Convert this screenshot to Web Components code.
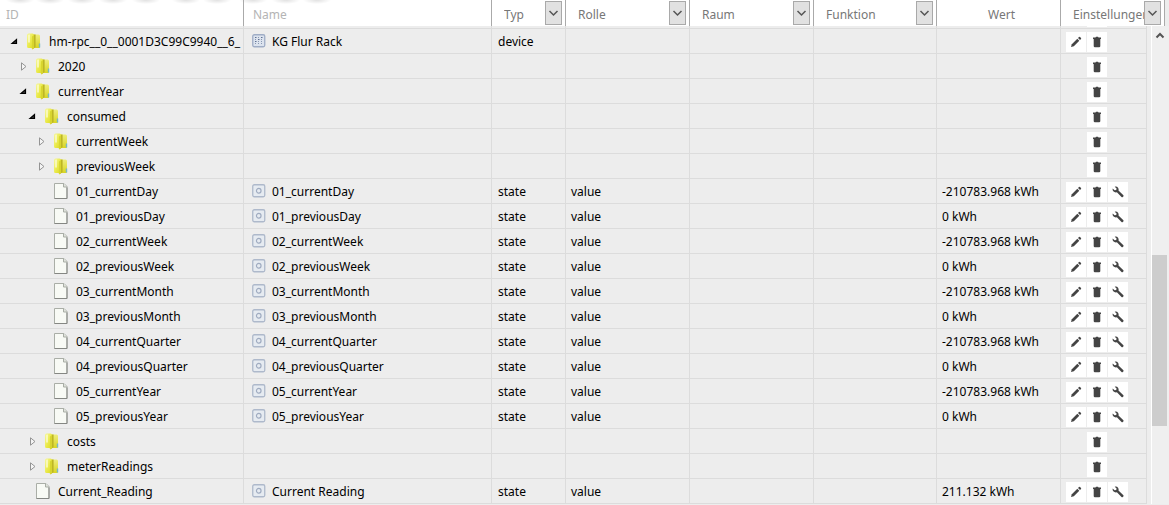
<!DOCTYPE html>
<html lang="de">
<head>
<meta charset="utf-8">
<title>Objekte</title>
<style>
  html { background: #ededed; }
  body { margin: 0; font: 12px/24px "Noto Sans", "Open Sans", sans-serif; color: #000; overflow: hidden; }
</style>
</head>
<body>
<object-browser></object-browser>

<template id="tpl-icon">
  <style>
    :host { display: block; flex: none; }
    svg { display: block; }
  </style>
</template>

<template id="tpl-tree-node">
  <style>
    :host { display: flex; align-items: flex-start; height: 24px; overflow: hidden; white-space: nowrap; padding-left: calc(9px * var(--level, 0) + 9px); }
    .caret { width: 18px; height: 24px; flex: none; display: grid; align-items: center; padding: 0; border: 0; background: none; }
    .icon { margin: 4px 7px 0 0; }
    .label { padding-top: 1px; }
  </style>
  <span class="caret"></span><ui-icon class="icon"></ui-icon><span class="label"><slot></slot></span>
</template>

<template id="tpl-row-actions">
  <style>
    :host { display: grid; grid-template-columns: repeat(3, 20px); gap: 1px; padding: 1px 0 0 5px; }
    button { width: 20px; height: 20px; padding: 0; border: 0; background: #fff; display: grid; place-items: center; }
    .edit { grid-column: 1; } .delete { grid-column: 2; } .config { grid-column: 3; }
    button { grid-row: 1; }
  </style>
</template>

<template id="tpl-filter">
  <style>
    :host { display: grid; grid-template-columns: 1fr 20px; height: 26px; align-items: start; }
    select { appearance: none; grid-area: 1 / 1 / 2 / 3; width: 100%; height: 26px; padding: 3px 0 0 12px; margin: 0; border: 0; background: none; font: inherit; color: #777; outline: 0; }
    .box { grid-area: 1 / 2; margin-top: 1px; pointer-events: none; }
  </style>
  <select></select><drop-box class="box"></drop-box>
</template>

<template id="tpl-drop-box">
  <style>
    :host { display: grid; place-items: center; width: 17px; height: 24px; box-sizing: border-box; background: #e1e1e1; border: 1px solid #a9a9a9; }
  </style>
  <ui-icon name="chevron"></ui-icon>
</template>

<template id="tpl-scroll">
  <style>
    :host { display: flex; flex-direction: column; align-items: flex-start; width: 17px; border-left: 1px solid #fff; margin-left: 4px; background: #efefef; }
    button { width: 15px; height: 18px; padding: 0; border: 0; background: none; display: grid; place-items: center; }
    .before { flex: 211; }
    .thumb { flex: 171; width: 15px; background: #cdcdcd; }
    .after { flex: 78; }
  </style>
  <button type="button" aria-label="Nach oben"><ui-icon name="up"></ui-icon></button>
  <div class="before"></div><div class="thumb"></div><div class="after"></div>
</template>

<template id="tpl-browser">
  <style>
    :host { display: block; }
    table { width: 100%; table-layout: fixed; border-collapse: separate; border-spacing: 0; }
    th, td { padding: 0; text-align: left; font-weight: 400; box-sizing: border-box; overflow: hidden; white-space: nowrap; }
    .head { padding-right: 4px; background: #ededed; }
    .head table {
      --puff: rgba(0,0,0,.12) 0, rgba(0,0,0,0) 100%;
      background:
        radial-gradient(14px 4px at 20px 0, var(--puff)), radial-gradient(14px 4px at 50px 0, var(--puff)),
        radial-gradient(14px 4px at 82px 0, var(--puff)), radial-gradient(14px 4px at 113px 0, var(--puff)),
        radial-gradient(14px 4px at 146px 0, var(--puff)), radial-gradient(14px 4px at 186px 0, var(--puff)),
        radial-gradient(14px 4px at 217px 0, var(--puff)), radial-gradient(14px 4px at 253px 0, var(--puff)),
        radial-gradient(14px 4px at 286px 0, var(--puff)), radial-gradient(14px 4px at 317px 0, var(--puff)), #fff;
    }
    th { height: 26px; border-right: 1px solid #aaa; color: #777; }
    th input { display: block; width: 100%; height: 26px; box-sizing: border-box; padding: 2px 0 0 9px; border: 0; background: none; font: inherit; outline: 0; }
    th:first-child input { padding-left: 6px; }
    th input::placeholder { color: #b4b4b4; }
    th.wert { text-align: center; padding: 3px 0 0 6px; line-height: 23px; }
    .settings { display: flex; height: 26px; align-items: flex-start; }
    .settings span { flex: 1; overflow: hidden; padding: 3px 0 0 12px; line-height: 23px; }
    .settings drop-box { margin: 1px 3px 0 0; }
    .view { display: flex; align-items: stretch; background: #ededed; }
    .view table { flex: 1; width: 0; }
    td { height: 25px; border-right: 1px solid #dcdcdc; border-bottom: 1px solid #dcdcdc; vertical-align: top; padding-left: 5px; padding-top: 2px; line-height: 22px; }
    td.node { padding-left: 0; padding-top: 0; line-height: 24px; }
    td.actions { padding: 2px 0 0 0; }
    tr.cut td { height: 3px; padding: 0; line-height: 0; }
    tr.cut i { display: block; width: 20px; height: 1px; margin: 0 0 1px 26px; background: #fff; }
    .name { display: flex; align-items: flex-start; }
    .name ui-icon { margin: 3px 6px 0 3px; }
    .type { padding-left: 6px; }
  </style>
  <div class="head">
    <table>
      <colgroup></colgroup>
      <thead><tr>
        <th><input type="text" placeholder="ID" aria-label="ID"></th>
        <th><input type="text" placeholder="Name" aria-label="Name"></th>
        <th><filter-select label="Typ"></filter-select></th>
        <th><filter-select label="Rolle"></filter-select></th>
        <th><filter-select label="Raum"></filter-select></th>
        <th><filter-select label="Funktion"></filter-select></th>
        <th class="wert">Wert</th>
        <th><div class="settings"><span>Einstellungen</span><drop-box></drop-box></div></th>
      </tr></thead>
    </table>
  </div>
  <div class="view">
    <table><colgroup></colgroup><tbody></tbody></table>
    <scroll-rail></scroll-rail>
  </div>
</template>

<script>
const folder = `<svg width="15" height="17" viewBox="0 0 15 17"><defs><linearGradient id="a" x2="1" y2="1"><stop stop-color="#f6f7a0"/><stop offset=".5" stop-color="#eaea4c"/><stop offset="1" stop-color="#dad71c"/></linearGradient><linearGradient id="b" x2="0" y2="1"><stop stop-color="#eeed7c"/><stop offset="1" stop-color="#d9d522"/></linearGradient></defs><path d="M6 1.500h5.500Q13 1.500 13 3v11q0 1-1 1H6z" fill="url(#b)"/><path d="M11.800 10.500h1.400v4h-1.400z" fill="#79b9c4"/><path d="M6 1.500h2.600V14L6 16z" fill="#bdb625"/><path d="M0 2Q0 .5 1.500.5h4Q7 .5 7 2v12.500L5.500 16.500 4.500 15h-3Q0 15 0 13.500z" fill="url(#a)"/><path d="M1 2.500q0-1 1-1h1v8H1z" fill="#fcfcd4" opacity=".7"/><path d="M5 3.500l2-1.500v12.500L5.500 16.500 5 15z" fill="#d8d52e"/></svg>`;
const ICONS = {
  folder,
  file: `<svg width="15" height="17" viewBox="0 0 15 17"><path d="M.5.5h9.500l3 3v12H.5z" fill="#f8faf5" stroke="#aaaea7"/><path d="M9.500.5v3.500h3.500" fill="#dfe3dc" stroke="#a8aca5"/><path d="M.5 15.500h12.500V4.500" fill="none" stroke="#858783"/></svg>`,
  open: `<svg width="18" height="9" viewBox="0 0 18 9"><path d="M3 6.500 7.500 2.500v4z" fill="#333" stroke="#000" stroke-width="1.200"/></svg>`,
  closed: `<svg width="18" height="9" viewBox="0 0 18 9"><path d="M3.500.8 8 4.500 3.500 8.200z" fill="#f4f4f4" stroke="#949494"/></svg>`,
  device: `<svg width="14" height="14" viewBox="0 0 14 14"><rect x=".75" y=".75" width="12" height="12" rx="1.500" fill="#dce3ee" stroke="#9fadc6" stroke-width="1.300"/><path d="M3.500 3v8M6.500 3v8M9.500 3v8" stroke="#8998b3" stroke-dasharray="1 1"/><path d="M3 3.500h1.500M6 5.500h1.500M9 3.500h1.500M3 7.500h1.500" stroke="#5f7093"/></svg>`,
  state: `<svg width="14" height="14" viewBox="0 0 14 14"><rect x=".75" y=".75" width="12" height="12" rx="1.500" fill="#e6ebf1" stroke="#aeb9cb" stroke-width="1.300"/><circle cx="6.750" cy="6.750" r="2.300" fill="none" stroke="#9fabc0" stroke-width="1.200"/></svg>`,
  edit: `<svg width="12" height="12" viewBox="0 0 12 12" fill="#444"><path d="M1 11l.8-2.800L7.300 2.700l2 2L3.800 10.200z"/><path d="M8 2l1-1q.5-.4 1 0l1 1q.4.5 0 1l-1 1z"/></svg>`,
  delete: `<svg width="12" height="12" viewBox="0 0 12 12" fill="#444"><path d="M2 1.500h2.500l.5-.7h2l.5.7H10V3H2z"/><path d="M2.700 3h6.600v7q0 1.200-1.200 1.200H3.900Q2.700 11.200 2.700 10z"/></svg>`,
  config: `<svg width="12" height="12" viewBox="0 0 12 12" fill="#444"><path d="M2.700.7Q5 .2 6.200 2q.7 1.200.3 2.500l4.900 4.700q.5.700-.1 1.400l-.5.500q-.7.500-1.300-.1L4.900 6.300Q2.800 6.900 1.300 5.300.2 4 .7 2.500l1.900 1.700 1.600-.3.400-1.500z"/></svg>`,
  chevron: `<svg width="11" height="8" viewBox="0 0 11 8"><path d="M1.500 2l4 4 4-4" fill="none" stroke="#555" stroke-width="1.500"/></svg>`,
  up: `<svg width="10" height="9" viewBox="0 0 10 9"><path d="M1.500 6.500 5 3l3.500 3.500" fill="none" stroke="#555" stroke-width="2"/></svg>`
};

class Base extends HTMLElement {
  mount(id) {
    const root = this.attachShadow({ mode: 'open' });
    root.append(document.getElementById(id).content.cloneNode(true));
    return root;
  }
}

customElements.define('ui-icon', class extends Base {
  static observedAttributes = ['name'];
  constructor() { super(); this.mount('tpl-icon'); }
  attributeChangedCallback(n, old, value) {
    this.shadowRoot.querySelector('svg')?.remove();
    this.shadowRoot.append(document.createRange().createContextualFragment(ICONS[value]));
  }
});

customElements.define('drop-box', class extends Base {
  constructor() { super(); this.mount('tpl-drop-box'); }
});

customElements.define('filter-select', class extends Base {
  connectedCallback() {
    const select = this.mount('tpl-filter').querySelector('select');
    select.add(new Option(this.getAttribute('label')));
    select.setAttribute('aria-label', this.getAttribute('label'));
  }
});

customElements.define('tree-node', class extends Base {
  connectedCallback() {
    const root = this.mount('tpl-tree-node');
    const state = this.getAttribute('state');
    this.style.setProperty('--level', this.getAttribute('level'));
    root.querySelector('.icon').setAttribute('name', state === 'leaf' ? 'file' : 'folder');
    if (state !== 'leaf') {
      const button = document.createElement('button');
      button.type = 'button';
      button.className = 'caret';
      button.setAttribute('aria-expanded', state === 'open');
      button.setAttribute('aria-label', this.textContent);
      const icon = document.createElement('ui-icon');
      icon.setAttribute('name', state);
      button.append(icon);
      root.querySelector('.caret').replaceWith(button);
    }
  }
});

customElements.define('row-actions', class extends Base {
  connectedCallback() {
    const root = this.mount('tpl-row-actions');
    const labels = { edit: 'Bearbeiten', delete: 'Löschen', config: 'Konfigurieren' };
    for (const name of this.getAttribute('items').split(' ')) {
      const button = document.createElement('button');
      button.type = 'button';
      button.className = name;
      button.setAttribute('aria-label', labels[name]);
      const icon = document.createElement('ui-icon');
      icon.setAttribute('name', name);
      button.append(icon);
      root.append(button);
    }
  }
});

customElements.define('scroll-rail', class extends Base {
  constructor() { super(); this.mount('tpl-scroll'); }
});

const state = (level, id, value, name = id) => ({ level, id, name, value, kind: 'leaf', type: 'state', role: 'value' });
const group = (level, id, kind) => ({ level, id, kind });
const meter = '-210783.968 kWh';
const OBJECTS = [
  { level: 0, id: 'hm-rpc__0__0001D3C99C9940__6_', kind: 'open', name: 'KG Flur Rack', type: 'device' },
  group(1, '2020', 'closed'),
  group(1, 'currentYear', 'open'),
  group(2, 'consumed', 'open'),
  group(3, 'currentWeek', 'closed'),
  group(3, 'previousWeek', 'closed'),
  state(3, '01_currentDay', meter),
  state(3, '01_previousDay', '0 kWh'),
  state(3, '02_currentWeek', meter),
  state(3, '02_previousWeek', '0 kWh'),
  state(3, '03_currentMonth', meter),
  state(3, '03_previousMonth', '0 kWh'),
  state(3, '04_currentQuarter', meter),
  state(3, '04_previousQuarter', '0 kWh'),
  state(3, '05_currentYear', meter),
  state(3, '05_previousYear', '0 kWh'),
  group(2, 'costs', 'closed'),
  group(2, 'meterReadings', 'closed'),
  state(1, 'Current_Reading', '211.132 kWh', 'Current Reading')
];

customElements.define('object-browser', class extends Base {
  connectedCallback() {
    const root = this.mount('tpl-browser');
    const widths = ['244px', 'auto', '74px', '124px', '124px', '123px', '124px'];
    root.querySelectorAll('colgroup').forEach((group, i) => {
      group.innerHTML = [...widths, i ? '86px' : '104px'].map(w => `<col style="width:${w}">`).join('');
    });
    const cut = `<tr class="cut" aria-hidden="true">${'<td></td>'.repeat(7)}<td><i></i></td></tr>`;
    root.querySelector('tbody').innerHTML = cut + OBJECTS.map(o => {
      const items = o.type === 'state' ? 'edit delete config' : o.type ? 'edit delete' : 'delete';
      const name = o.name ? `<div class="name"><ui-icon name="${o.type}"></ui-icon>${o.name}</div>` : '';
      return `<tr><td class="node"><tree-node level="${o.level}" state="${o.kind}">${o.id}</tree-node></td>
        <td>${name}</td><td class="type">${o.type || ''}</td><td>${o.role || ''}</td><td></td><td></td>
        <td>${o.value || ''}</td><td class="actions"><row-actions items="${items}"></row-actions></td></tr>`;
    }).join('');
  }
});
</script>
</body>
</html>
